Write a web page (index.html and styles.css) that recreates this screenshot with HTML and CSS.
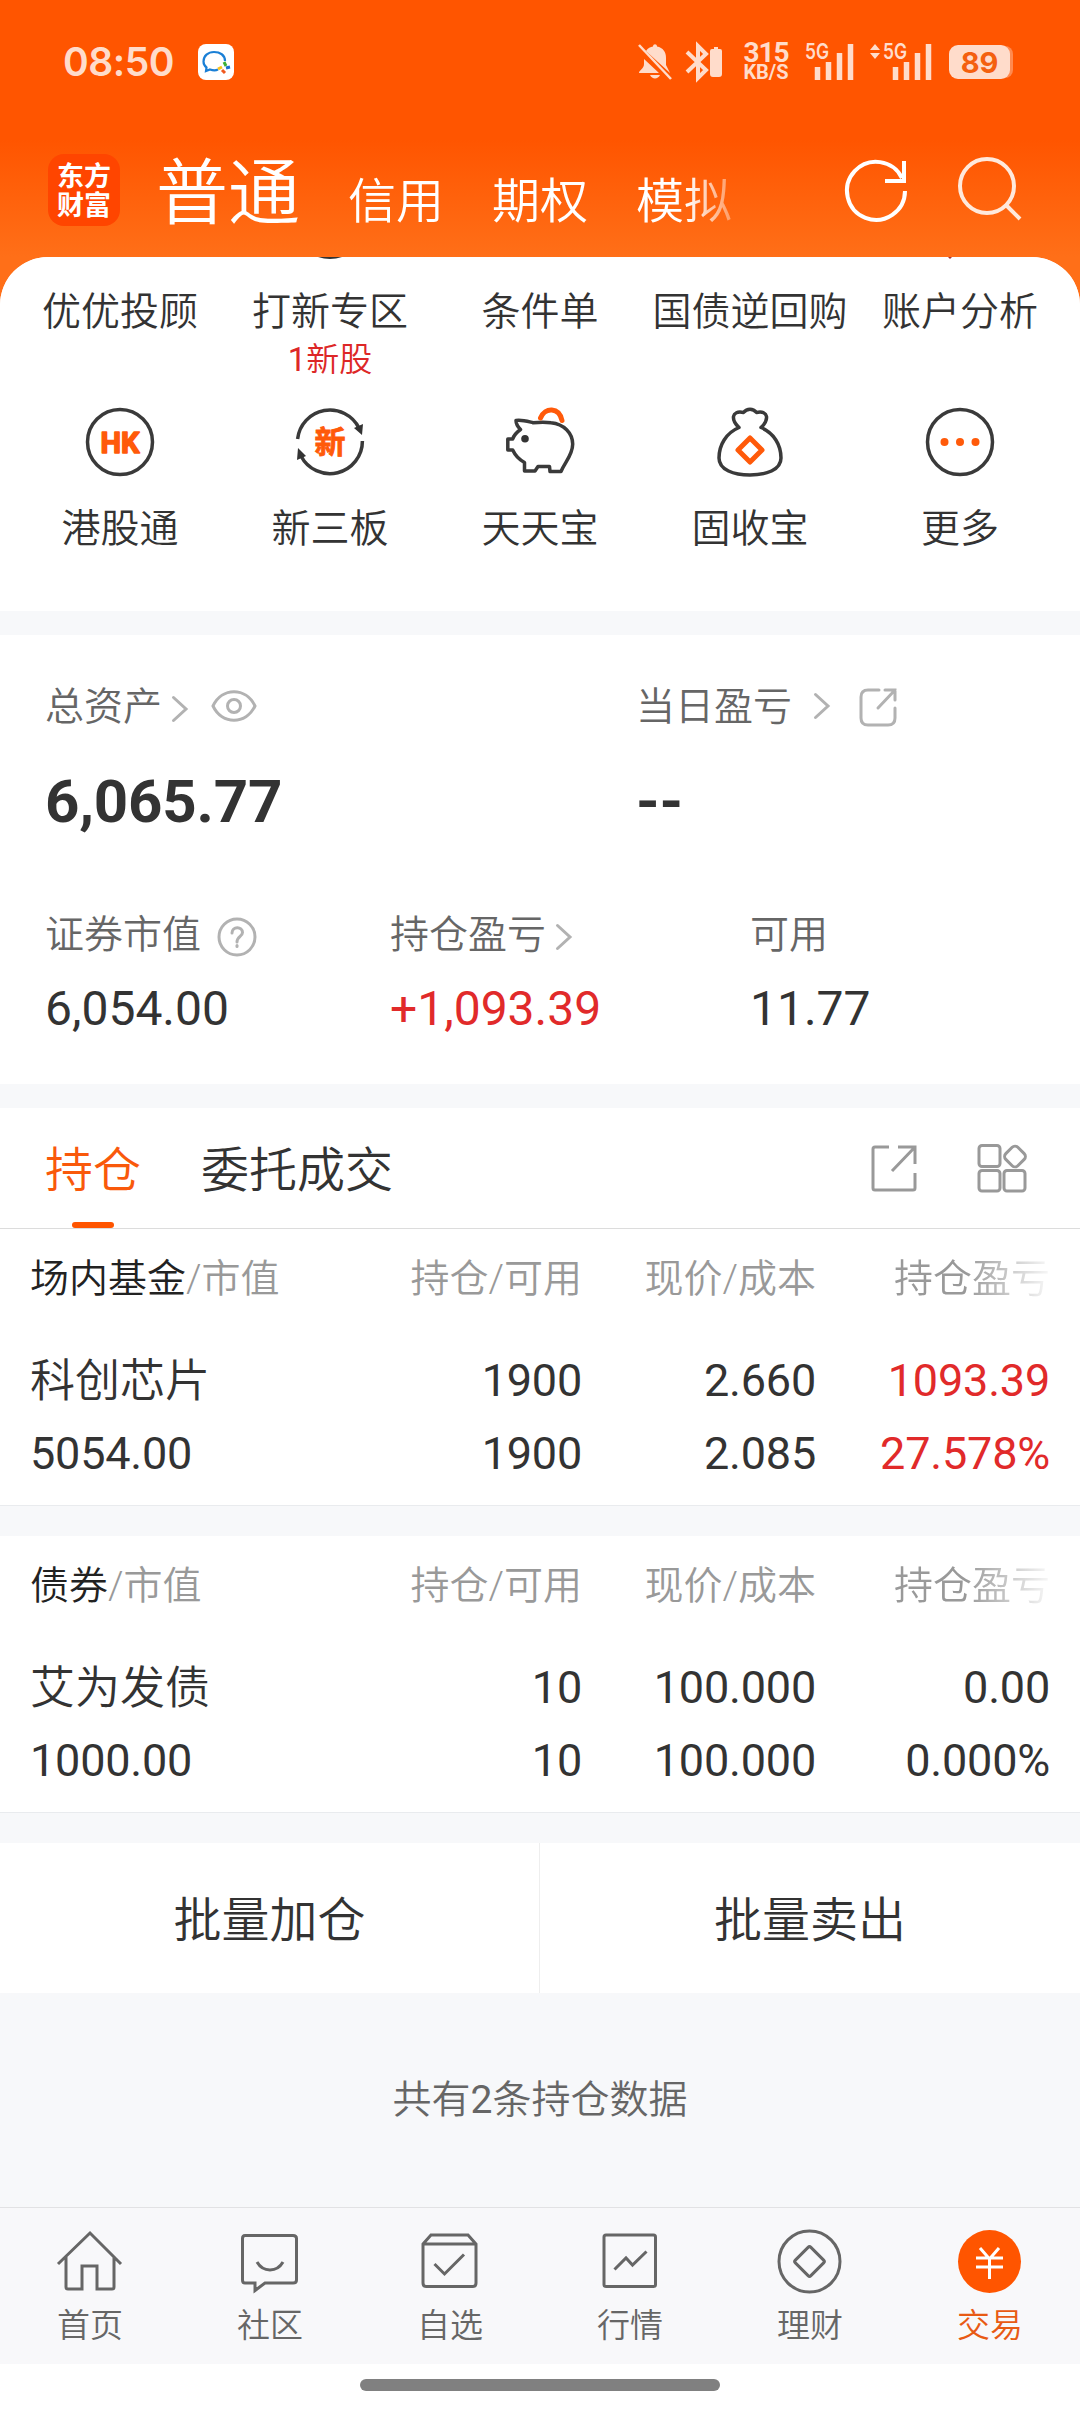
FILE: index.html
```html
<!DOCTYPE html>
<html lang="zh-CN">
  <head>
    <meta charset="UTF-8" />
    <meta name="viewport" content="width=device-width, initial-scale=1.0" />
    <title>交易</title>
    <link rel="stylesheet" href="styles.css">
  </head>

  <body>
    <header class="header">
      <div class="status">
        <span class="time">08:50</span>
        <svg class="wecom" width="36" height="36" viewBox="0 0 36 36">
          <rect width="36" height="36" rx="8" fill="#fff" />
          <path d="M27 17C27 11 22 8 16 8S5.500 12 5.500 17.500C5.500 20 6.500 22 8.500 23.500L8 27L12 25.500C15 26.500 18 26.500 20 25.500" fill="none" stroke="#1a7fd6" stroke-width="2.200" />
          <path d="M26 18l2 4" stroke="#3cb034" stroke-width="3" />
          <path d="M28 24l4-1" stroke="#1a6fd0" stroke-width="3" />
          <path d="M24 26l3 3" stroke="#f0581e" stroke-width="3" />
          <path d="M20 25l4-2" stroke="#fbc21c" stroke-width="3" />
        </svg>
        <div class="status-icons">
          <svg width="38" height="40" viewBox="0 0 38 40">
            <path d="M10 9C12 6 14.500 5 17 4.500C17 1.500 21 1.500 21 4.500C27 5.500 30 10 30 16V23L34 31ZM8 17L23 31H3C3 28 8 27 8 22ZM14 33H24C22 37.500 16 37.500 14 33Z" fill="currentColor" />
            <path d="M3 3L35 37" stroke="currentColor" stroke-width="2.500" />
          </svg>
          <svg class="bluetooth" width="40" height="40" viewBox="0 0 40 40">
            <path d="M3 10L22 28L14 36V4L22 12L3 30" fill="none" stroke="currentColor" stroke-width="4" />
            <path d="M30 5h4v2h2q2 0 2 2V32q0 3-3 3H29q-3 0-3-3V9q0-2 2-2h2Z" fill="currentColor" />
          </svg>
          <div class="speed"><b>315</b><span>KB/S</span></div>
          <svg class="signal" width="50" height="40" viewBox="0 0 50 40">
            <text x="0" y="17" class="net" textLength="24" lengthAdjust="spacingAndGlyphs">5G</text>
            <path d="M12.500 38V25M23.500 38V20M34.500 38V11M45.500 38V2" stroke="currentColor" stroke-width="5.500" />
          </svg>
          <svg class="signal-two" width="64" height="40" viewBox="0 0 64 40">
            <path d="M1 8L6 2L11 8ZM1 11H11L6 17Z" fill="currentColor" />
            <text x="14" y="17" class="net" textLength="24" lengthAdjust="spacingAndGlyphs">5G</text>
            <path d="M26.500 38V25M37.500 38V20M48.500 38V11M59.500 38V2" stroke="currentColor" stroke-width="5.500" />
          </svg>
          <div class="battery">89</div>
        </div>
      </div>

      <div class="topbar">
        <div class="logo">东方<br />财富</div>
        <nav class="accounts">
          <a class="current">普通</a>
          <a>信用</a>
          <a>期权</a>
          <a>模拟</a>
        </nav>
        <svg class="refresh" width="66" height="66" viewBox="0 0 66 66" fill="none" stroke="#fff" stroke-width="4">
          <path d="M62 34A29 29 0 1 1 59 21" />
          <path d="M61 4V24H42" />
        </svg>
        <svg class="search" width="66" height="66" viewBox="0 0 66 66" fill="none" stroke="#ffe9dc" stroke-width="4">
          <circle cx="30" cy="29" r="27" />
          <path d="M49 48L63 62" />
        </svg>
      </div>
    </header>

    <main>
      <section class="features">
        <!-- bottoms of the row scrolled under the header -->
        <svg class="scrolled" width="1080" height="4" viewBox="0 0 1080 4">
          <path d="M318 0H342Q330 4 318 0Z" fill="#333" />
          <path d="M948 0H952L950 2Z" fill="#a33" />
        </svg>
        <div class="feature-grid">
          <div class="feature">优优投顾</div>
          <div class="feature">打新专区<small><i>1</i>新股</small></div>
          <div class="feature">条件单</div>
          <div class="feature">国债逆回购</div>
          <div class="feature">账户分析</div>
          <div class="feature">
            <svg width="72" height="72" viewBox="0 0 72 72">
              <circle cx="36" cy="36" r="32.500" fill="none" stroke="#3a3a3a" stroke-width="3.500" />
              <text class="hk" x="36" y="46.500" textLength="39" lengthAdjust="spacingAndGlyphs">HK</text>
            </svg>
            港股通
          </div>
          <div class="feature">
            <svg width="72" height="72" viewBox="0 0 72 72">
              <g fill="none" stroke="#3a3a3a" stroke-width="3.500">
                <path d="M3.600 33A32.500 32.500 0 0 1 65 22" />
                <path d="M68.400 35A32.500 32.500 0 0 1 7 50" />
              </g>
              <path d="M60 22L69 18L68 29ZM12 50L3 54L4 42Z" fill="#333" />
              <text class="xin" x="36" y="47">新</text>
            </svg>
            新三板
          </div>
          <div class="feature">
            <svg width="72" height="72" viewBox="0 0 72 72" fill="none" stroke-width="3.500" stroke-linejoin="round">
              <path d="M12 14.500C17 13.500 22 15 29 16.700C36 16 42 16 47 16.700C60 18 68.500 27 68.700 38C68.700 49 61 56 57 65.500H46L45.500 60.500H34L31 65H20.500V56.500C14 53 11 49 8.700 44H3.800V33H8.700C10 29 13 26 16.500 23.500C13 20 12 18 12 14.500Z" stroke="#3a3a3a" />
              <circle cx="21" cy="32.700" r="3.800" fill="#333" />
              <path d="M36.500 12C41 1 55 1 58 14.500" stroke="#ff5a0a" stroke-width="5" stroke-linecap="round" />
            </svg>
            天天宝
          </div>
          <div class="feature">
            <svg width="72" height="72" viewBox="0 0 72 72" fill="none" stroke-width="3.500" stroke-linejoin="round">
              <path d="M25 21.500C17 14 17 4 29.500 6.500C33 2 39 2 42.500 6.500C55 4 55 14 47 21.500C60 27 67 39 67 52C67 64 52 69 36 69S5 64 5 52C5 39 12 27 25 21.500Z" stroke="#3a3a3a" />
              <path d="M36 32L48 44L36 56L24 44Z" stroke="#ff5a0a" stroke-width="5" />
            </svg>
            固收宝
          </div>
          <div class="feature">
            <svg width="72" height="72" viewBox="0 0 72 72">
              <circle cx="36" cy="36" r="32.500" fill="none" stroke="#3a3a3a" stroke-width="3.500" />
              <g fill="#ff5a0a">
                <circle cx="20.500" cy="36" r="4" />
                <circle cx="36" cy="36" r="4" />
                <circle cx="51.500" cy="36" r="4" />
              </g>
            </svg>
            更多
          </div>
        </div>
      </section>

      <section class="summary">
        <div class="totals">
          <div>
            <div class="label">
              <span>总资产</span>
              <svg class="total-chevron" width="16" height="26" viewBox="0 0 16 26"><path d="M1.500 1.500L14 13L1.500 24.500" /></svg>
              <svg class="eye" width="46" height="34" viewBox="0 0 46 34">
                <path d="M2 17C11 -2 35 -2 44 17C35 36 11 36 2 17Z" />
                <circle cx="23" cy="17" r="6.500" />
              </svg>
            </div>
            <div class="amount">6,065.77</div>
          </div>
          <div>
            <div class="label">
              <span>当日盈亏</span>
              <svg class="day-chevron" width="16" height="26" viewBox="0 0 16 26"><path d="M1.500 1.500L14 13L1.500 24.500" /></svg>
              <svg class="share-small" width="40" height="40" viewBox="0 0 40 40">
                <path d="M20 2H9Q2 2 2 9V30Q2 37 9 37H29Q36 37 36 30V20" />
                <path d="M26 2H36V12M36 2L19 20" />
              </svg>
            </div>
            <div class="amount">--</div>
          </div>
        </div>
        <div class="details">
          <div>
            <div class="label">
              <span>证券市值</span>
              <svg class="help" width="40" height="40" viewBox="0 0 40 40">
                <circle cx="20" cy="20" r="18" />
                <path d="M15 16C15 9 25.500 9 25.500 15.500C25.500 19.500 20 19.500 20 25" />
                <path d="M20 28.500V29.500" />
              </svg>
            </div>
            <div class="value">6,054.00</div>
          </div>
          <div>
            <div class="label">
              <span>持仓盈亏</span>
              <svg class="hold-chevron" width="16" height="26" viewBox="0 0 16 26"><path d="M1.500 1.500L14 13L1.500 24.500" /></svg>
            </div>
            <div class="value red">+1,093.39</div>
          </div>
          <div>
            <div class="label"><span>可用</span></div>
            <div class="value">11.77</div>
          </div>
        </div>
      </section>

      <div class="tabs">
        <a class="tab active">持仓</a>
        <a class="tab">委托成交</a>
        <svg class="share" width="48" height="48" viewBox="0 0 48 48">
          <path d="M19 3H5Q3 3 3 5V44Q3 46 5 46H43Q45 46 45 44V29" />
          <path d="M28 3H45V20M45 3L22 27" />
        </svg>
        <svg class="widgets" width="50" height="50" viewBox="0 0 50 50">
          <rect x="2" y="2.500" width="21" height="21" rx="3" />
          <rect x="2" y="27.500" width="21" height="20.500" rx="3" />
          <rect x="27" y="27.500" width="21" height="20.500" rx="3" />
          <rect x="29.500" y="5" width="17" height="17" rx="4" transform="rotate(45 38 13.500)" />
        </svg>
      </div>

      <section class="holdings">
        <div class="row head">
          <span><b>场内基金</b>/市值</span>
          <span>持仓/可用</span>
          <span>现价/成本</span>
          <span class="fade">持仓盈亏</span>
        </div>
        <div class="row first">
          <span class="name">科创芯片</span>
          <span>1900</span>
          <span>2.660</span>
          <span class="red">1093.39</span>
        </div>
        <div class="row">
          <span>5054.00</span>
          <span>1900</span>
          <span>2.085</span>
          <span class="red">27.578%</span>
        </div>
      </section>

      <section class="holdings">
        <div class="row head">
          <span><b>债券</b>/市值</span>
          <span>持仓/可用</span>
          <span>现价/成本</span>
          <span class="fade">持仓盈亏</span>
        </div>
        <div class="row first">
          <span class="name">艾为发债</span>
          <span>10</span>
          <span>100.000</span>
          <span>0.00</span>
        </div>
        <div class="row">
          <span>1000.00</span>
          <span>10</span>
          <span>100.000</span>
          <span>0.000%</span>
        </div>
      </section>

      <div class="batch">
        <a>批量加仓</a>
        <a>批量卖出</a>
      </div>

      <p class="count">共有<i>2</i>条持仓数据</p>
    </main>

    <nav class="bottom-nav">
      <a>
        <svg width="72" height="72" viewBox="0 0 72 72">
          <path d="M4 38L36 7L67 38M12 31V61Q12 63 14 63H28V40H43V63H58Q60 63 60 61V31" />
        </svg>
        首页
      </a>
      <a>
        <svg width="72" height="72" viewBox="0 0 72 72">
          <path d="M11 9.500H59Q62.500 9.500 62.500 12.500V54Q62.500 57 59 57H31L21 64.500V57H11Q8.500 57 8.500 54V12.500Q8.500 9.500 11 9.500Z" />
          <path d="M23 36C29 46.500 43 46.500 49 36" />
        </svg>
        社区
      </a>
      <a>
        <svg width="72" height="72" viewBox="0 0 72 72">
          <path d="M9 18L17 9H54L62 18V57Q62 60.500 59 60.500H12Q9 60.500 9 57ZM9 18H62" />
          <path d="M20.500 38L30.500 48L50 28.500" />
        </svg>
        自选
      </a>
      <a>
        <svg width="72" height="72" viewBox="0 0 72 72">
          <rect x="10" y="9" width="51.500" height="51.500" rx="2" />
          <path d="M20.500 43.500L32 32L38.500 39L52.500 25.500" />
        </svg>
        行情
      </a>
      <a>
        <svg width="72" height="72" viewBox="0 0 72 72">
          <circle cx="35.500" cy="35.500" r="30.500" />
          <rect x="24.500" y="24.500" width="22" height="22" rx="2" transform="rotate(45 35.500 35.500)" />
        </svg>
        理财
      </a>
      <a class="active">
        <svg width="72" height="72" viewBox="0 0 72 72">
          <circle cx="35.500" cy="35.500" r="31.500" fill="#ff5500" stroke="none" />
          <path d="M26 22L35.500 33L45 22M22 32H49M22 41H49M35.500 32V53" stroke="#fff" />
        </svg>
        交易
      </a>
    </nav>
    <div class="home-bar"></div>
  </body>
</html>
```

FILE: styles.css
```css
* {
  box-sizing: border-box;
}

body {
  margin: 0;
  width: 1080px;
  height: 2412px;
  display: flex;
  flex-direction: column;
  font-family: Roboto, "Noto Sans CJK SC", sans-serif;
  font-weight: 350;
  color: #333;
  background: #fff;
}

svg {
  display: block;
  flex: none;
  overflow: visible;
}

i {
  font-style: normal;
  font-weight: 400;
}

/* header */
.header {
  height: 305px;
  margin-bottom: -48px;
  background: linear-gradient(#ff5500 140px, #ff6f18 257px);
}

.status {
  height: 123px;
  padding: 0 70px 0 63px;
  display: flex;
  align-items: center;
  color: #ffdccb;
}

.time {
  font-family: Inter, sans-serif;
  font-size: 39px;
  font-weight: 600;
  letter-spacing: -0.5px;
  width: 112px;
}

.wecom {
  margin-left: 23px;
}

.status-icons {
  margin-left: auto;
  display: flex;
  align-items: center;
}

.bluetooth {
  margin-left: 10px;
}

.speed {
  width: 44px;
  margin-left: 20px;
  display: flex;
  flex-direction: column;
  align-items: center;
  font-family: Roboto, sans-serif;
  font-weight: 700;
  line-height: 22px;
}

.speed b {
  font-size: 28px;
  font-weight: 700;
  letter-spacing: -1px;
}

.speed span {
  font-size: 20px;
  line-height: 17px;
}

.signal {
  margin-left: 17px;
}

.signal-two {
  margin-left: 14px;
}

.net {
  font-family: Inter, sans-serif;
  font-size: 21px;
  font-weight: 600;
  fill: currentColor;
}

.battery {
  width: 61px;
  height: 34px;
  margin-left: 16px;
  border-radius: 9px;
  background: #ffdccb;
  box-shadow: 4px 0 0 -1px #ff8a50;
  color: #f4600f;
  font-family: Inter, sans-serif;
  font-size: 29px;
  font-weight: 700;
  line-height: 35px;
  text-align: center;
}

.topbar {
  height: 133px;
  padding: 0 57px 0 48px;
  display: flex;
  align-items: center;
  color: #fff;
}

.logo {
  width: 72px;
  height: 72px;
  padding: 6px 0 0 9px;
  border-radius: 16px;
  background: #ff4500;
  font-family: "Noto Sans CJK SC", sans-serif;
  font-size: 27px;
  font-weight: 700;
  line-height: 29px;
}

.accounts {
  margin-left: 36px;
  padding-bottom: 7px;
  width: 600px;
  display: flex;
  align-items: baseline;
  gap: 48px;
  font-size: 48px;
  -webkit-mask-image: linear-gradient(90deg, #000 530px, transparent 600px);
  mask-image: linear-gradient(90deg, #000 530px, transparent 600px);
}

.accounts .current {
  font-size: 72px;
}

.refresh {
  margin-left: 87px;
}

.search {
  margin-left: 48px;
}

/* feature shortcuts */
main {
  display: flex;
  flex-direction: column;
  height: 1950px;
  background: #f7f8fa;
  border-radius: 48px 48px 0 0;
}

main > * {
  flex: none;
}

.features {
  height: 354px;
  background: #fff;
  border-radius: 48px 48px 0 0;
}

.feature-grid {
  padding: 27px 15px 0;
  display: grid;
  grid-template-columns: repeat(5, 210px);
  grid-template-rows: 118px auto;
}

.feature {
  display: flex;
  flex-direction: column;
  align-items: center;
  font-size: 39px;
  line-height: 48px;
}

.feature small {
  font-size: 33px;
  color: #dd2727;
}

.feature svg {
  margin-bottom: 27px;
}

.hk,
.xin {
  fill: #ff5a0a;
  text-anchor: middle;
  font-weight: 700;
}

.hk {
  font-size: 29px;
  stroke: #ff5a0a;
  stroke-width: 1.5;
  stroke-linejoin: round;
}

.xin {
  font-size: 31px;
  stroke: #ff5a0a;
  stroke-width: 0.8;
}

/* asset summary */
.summary {
  height: 449px;
  margin-top: 24px;
  padding: 50px 45px 0;
  background: #fff;
}

.totals {
  display: grid;
  grid-template-columns: 591px auto;
}

.details {
  margin-top: 75px;
  display: grid;
  grid-template-columns: 345px 360px auto;
}

.label {
  display: flex;
  align-items: center;
  height: 48px;
  font-size: 39px;
  color: #666;
}

.label span {
  line-height: 45px;
  padding-bottom: 3px;
}

.label svg {
  fill: none;
  stroke: #b2b2b2;
  stroke-width: 3;
  stroke-linecap: round;
}

.total-chevron {
  margin-left: 10px;
}

.eye {
  margin: 0 0 6px 23px;
}

.day-chevron {
  margin: 0 0 6px 22px;
}

.share-small {
  margin: 0 0 3px 29px;
}

.help {
  margin: 0 0 1px 16px;
}

.hold-chevron {
  margin: 0 0 1px 10px;
}

.amount {
  margin-top: 33px;
  font-size: 60px;
  font-weight: 700;
  letter-spacing: -0.2px;
  line-height: 72px;
}

.value {
  margin-top: 20px;
  font-size: 48px;
  font-weight: 400;
  line-height: 56px;
}

.red {
  color: #e12a2a;
}

/* tabs */
.tabs {
  height: 121px;
  margin-top: 24px;
  padding: 0 53px 0 45px;
  display: flex;
  align-items: center;
  background: #fff;
  border-bottom: 1px solid #dcdcdc;
}

.tab {
  position: relative;
  height: 120px;
  margin-right: 60px;
  font-size: 48px;
  line-height: 126px;
}

.tab.active {
  color: #f9590b;
}

.tab.active::after {
  content: "";
  position: absolute;
  left: 27px;
  bottom: 0;
  width: 42px;
  height: 6px;
  border-radius: 3px;
  background: #ff5500;
}

.tabs svg {
  fill: none;
  stroke: #999;
  stroke-width: 3;
}

.share {
  margin-left: auto;
}

.widgets {
  margin-left: 59px;
}

/* holdings */
.holdings {
  height: 277px;
  padding: 26px 30px 0;
  background: #fff;
  border-bottom: 1px solid #e9ebee;
}

.holdings + .holdings {
  margin-top: 30px;
}

.row {
  display: grid;
  grid-template-columns: 318px repeat(3, 234px);
  font-size: 45px;
  font-weight: 400;
  letter-spacing: -0.2px;
  line-height: 56px;
  text-align: right;
}

.row span:first-child {
  text-align: left;
}

.row .name {
  font-weight: 350;
  letter-spacing: 0;
  line-height: 58px;
  height: 56px;
}

.row.head {
  font-size: 39px;
  font-weight: 350;
  letter-spacing: 0;
  line-height: 48px;
  color: #999;
}

.row b {
  font-weight: 350;
  color: #222;
}

.row.first {
  margin: 50px 0 17px;
}

.fade {
  -webkit-mask-image: linear-gradient(90deg, #000 150px, transparent 240px);
  mask-image: linear-gradient(90deg, #000 150px, transparent 240px);
}

/* batch actions */
.batch {
  height: 150px;
  margin-top: 30px;
  display: flex;
  background: #fff;
}

.batch a {
  width: 540px;
  font-size: 48px;
  line-height: 155px;
  text-align: center;
}

.batch a:first-child {
  border-right: 1px solid #eee;
}

.count {
  margin: 0;
  font-size: 39px;
  line-height: 214px;
  text-align: center;
  color: #666;
}

/* bottom navigation */
.bottom-nav {
  height: 157px;
  padding-top: 18px;
  display: flex;
  background: #f8f8fa;
  border-top: 1px solid #e2e2e4;
  color: #666;
}

.bottom-nav a {
  flex: 1;
  display: flex;
  flex-direction: column;
  align-items: center;
  gap: 8px;
  font-size: 33px;
  line-height: 40px;
}

.bottom-nav svg {
  fill: none;
  stroke: #666;
  stroke-width: 3;
}

.bottom-nav .active {
  color: #e85a14;
}

.home-bar {
  width: 360px;
  height: 12px;
  margin: 15px auto 0;
  border-radius: 6px;
  background: #808080;
}
```
